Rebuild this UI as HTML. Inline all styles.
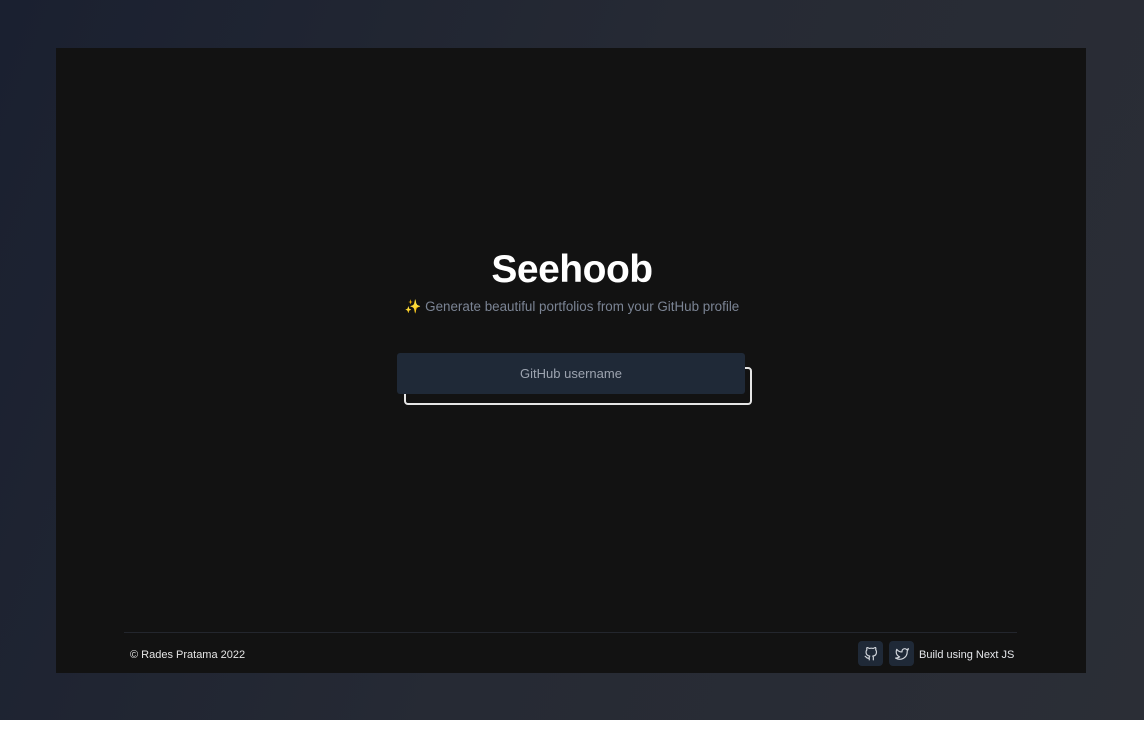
<!DOCTYPE html>
<html><head><style>
html,body{margin:0;padding:0}
body{width:1144px;height:732px;background:#fff;position:relative;overflow:hidden;font-family:"Liberation Sans",sans-serif}
.bg{position:absolute;left:0;top:0;width:1144px;height:720px;background:linear-gradient(110deg,#1a2030 0%,#262a34 50%,#2b2e36 100%)}
.panel{position:absolute;left:56px;top:48px;width:1030px;height:625px;background:#121212}
h1{position:absolute;left:0;width:1144px;top:248px;margin:0;text-align:center;color:#fff;font-size:39px;font-weight:bold;letter-spacing:-0.5px}
.sub{position:absolute;left:0;width:1144px;top:299px;text-align:center;color:#7b8494;font-size:13.4px}
.outline{position:absolute;left:404px;top:367px;width:344px;height:34px;border:2px solid #e5e5e5;border-radius:4px}
.input{position:absolute;left:397px;top:353px;width:348px;height:41px;background:#1f2937;border-radius:3px;color:#9ca3af;font-size:13px;text-align:center;line-height:41px}
.line{position:absolute;left:124px;top:632px;width:893px;height:1px;background:#23262d}
.copy{position:absolute;left:130px;top:649px;color:#e5e5e5;font-size:11px}
.ic{position:absolute;top:641px;width:25px;height:25px;background:#1f2937;border-radius:4px;display:flex;align-items:center;justify-content:center}
.build{position:absolute;left:919px;top:649px;color:#e5e7eb;font-size:11px}
</style></head><body>
<div class="bg"></div>
<div class="panel"></div>
<h1>Seehoob</h1>
<div class="sub"><span style="color:#f5d90a">✨</span> Generate beautiful portfolios from your GitHub profile</div>
<div class="outline"></div>
<div class="input">GitHub username</div>
<div class="line"></div>
<div class="copy">© Rades Pratama 2022</div>
<div class="ic" style="left:858px"><svg width="14" height="14" viewBox="0 0 24 24" fill="none" stroke="#d1d5db" stroke-width="2" stroke-linecap="round" stroke-linejoin="round"><path d="M9 19c-5 1.5-5-2.5-7-3m14 6v-3.9a3.4 3.4 0 0 0-1-2.6c3.1-.3 6.4-1.5 6.4-7A5.4 5.4 0 0 0 20 4.8 5 5 0 0 0 19.9 1S18.7.6 16 2.5a13.4 13.4 0 0 0-7 0C6.3.6 5.1 1 5.1 1A5 5 0 0 0 5 4.8 5.4 5.4 0 0 0 3.5 8.5c0 5.4 3.3 6.6 6.4 7A3.4 3.4 0 0 0 9 18.1V22"/></svg></div>
<div class="ic" style="left:889px"><svg width="14" height="14" viewBox="0 0 24 24" fill="none" stroke="#d1d5db" stroke-width="2" stroke-linecap="round" stroke-linejoin="round"><path d="M23 3a10.9 10.9 0 0 1-3.1 1.5 4.5 4.5 0 0 0-7.9 3v1A10.7 10.7 0 0 1 3 4s-4 9 5 13a11.6 11.6 0 0 1-7 2c9 5 20 0 20-11.5a4.5 4.5 0 0 0-.1-.8A7.7 7.7 0 0 0 23 3z"/></svg></div>
<div class="build">Build using Next JS</div>
</body></html>
